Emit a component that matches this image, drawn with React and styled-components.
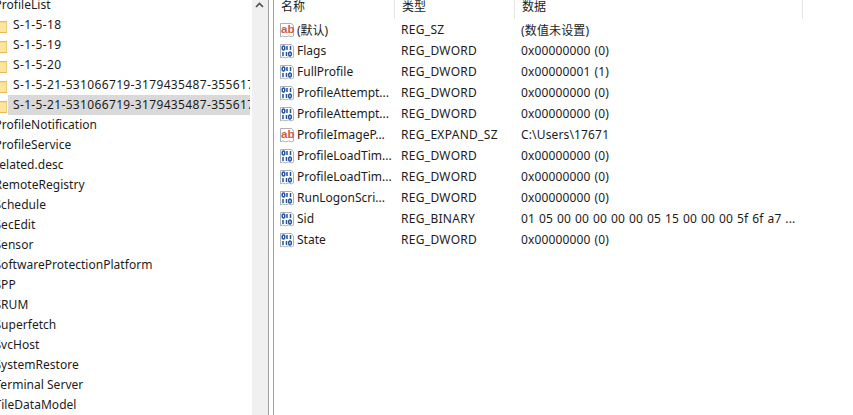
import React from 'react';
import styled, { createGlobalStyle } from 'styled-components';

const GlobalStyle = createGlobalStyle`
  html, body {
    margin: 0;
    padding: 0;
    background: #fff;
  }
  body {
    font-family: "Noto Sans", "Noto Sans CJK SC", sans-serif;
    font-size: 12px;
    color: #1c1c1c;
  }
`;

const treeItems = [
  { label: 'ProfileList' },
  { label: 'S-1-5-18', folder: true },
  { label: 'S-1-5-19', folder: true },
  { label: 'S-1-5-20', folder: true },
  { label: 'S-1-5-21-531066719-3179435487-3556176', folder: true },
  { label: 'S-1-5-21-531066719-3179435487-3556176', folder: true, selected: true },
  { label: 'ProfileNotification' },
  { label: 'ProfileService' },
  { label: 'related.desc' },
  { label: 'RemoteRegistry' },
  { label: 'Schedule' },
  { label: 'SecEdit' },
  { label: 'Sensor' },
  { label: 'SoftwareProtectionPlatform' },
  { label: 'SPP' },
  { label: 'SRUM' },
  { label: 'Superfetch' },
  { label: 'SvcHost' },
  { label: 'SystemRestore' },
  { label: 'Terminal Server' },
  { label: 'TileDataModel' },
];

const values = [
  { icon: 'text', name: '(默认)', type: 'REG_SZ', data: '(数值未设置)' },
  { icon: 'bin', name: 'Flags', type: 'REG_DWORD', data: '0x00000000 (0)' },
  { icon: 'bin', name: 'FullProfile', type: 'REG_DWORD', data: '0x00000001 (1)' },
  { icon: 'bin', name: 'ProfileAttempt...', type: 'REG_DWORD', data: '0x00000000 (0)' },
  { icon: 'bin', name: 'ProfileAttempt...', type: 'REG_DWORD', data: '0x00000000 (0)' },
  { icon: 'text', name: 'ProfileImageP...', type: 'REG_EXPAND_SZ', data: 'C:\\Users\\17671' },
  { icon: 'bin', name: 'ProfileLoadTim...', type: 'REG_DWORD', data: '0x00000000 (0)' },
  { icon: 'bin', name: 'ProfileLoadTim...', type: 'REG_DWORD', data: '0x00000000 (0)' },
  { icon: 'bin', name: 'RunLogonScri...', type: 'REG_DWORD', data: '0x00000000 (0)' },
  { icon: 'bin', name: 'Sid', type: 'REG_BINARY', data: '01 05 00 00 00 00 00 05 15 00 00 00 5f 6f a7 ...' },
  { icon: 'bin', name: 'State', type: 'REG_DWORD', data: '0x00000000 (0)' },
];

const FolderIcon = () => (
  <svg width="16" height="16" viewBox="0 0 16 16">
    <path d="M0 2.5h5l2 2h9v11H0z" fill="#fbdc82" stroke="#e3bb5c" strokeWidth="1" />
    <path d="M1 6h14v9H1z" fill="#fde59f" />
  </svg>
);

const PageShape = () => (
  <path d="M1.5 1.5h11l2 2.5v10l-2 .8-3-.8-3 .8-3-.8-2 .8z" fill="#fff" stroke="#aab0bc" />
);

const TextIcon = () => (
  <svg width="16" height="16" viewBox="0 0 16 16">
    <PageShape />
    <text x="2" y="10.6" fontFamily="Liberation Sans, sans-serif" fontSize="11.5" fontWeight="700" fill="#cf5a45">ab</text>
  </svg>
);

const BinaryIcon = () => (
  <svg width="16" height="16" viewBox="0 0 16 16">
    <PageShape />
    <g fill="none" stroke="#22549f" strokeWidth="1.5">
      <ellipse cx="4.5" cy="5" rx="1.3" ry="2" />
      <path d="M8 3v4M11.5 3v4" />
      <path d="M4 9v4M7.5 9v4" />
      <ellipse cx="11" cy="11" rx="1.3" ry="2" />
    </g>
  </svg>
);

const Chevron = () => (
  <svg width="9" height="6" viewBox="0 0 9 6">
    <path d="M1 5l3.5-3.5L8 5" fill="none" stroke="#505050" strokeWidth="1.6" />
  </svg>
);

const App = () => (
  <>
    <GlobalStyle />
    <Window>
      <TreePane>
        <TreeList>
          {treeItems.map((item, i) => (
            <TreeRow key={i}>
              {item.folder && <FolderIcon />}
              <TreeLabel $folder={item.folder} $selected={item.selected}>{item.label}</TreeLabel>
            </TreeRow>
          ))}
        </TreeList>
      </TreePane>
      <ScrollBar>
        <Chevron />
      </ScrollBar>
      <Splitter />
      <ListPane>
        <HeaderRow>
          <HeaderCell $width={121}>名称</HeaderCell>
          <HeaderCell $width={120}>类型</HeaderCell>
          <HeaderCell $width={288}>数据</HeaderCell>
        </HeaderRow>
        {values.map((v, i) => (
          <ValueRow key={i}>
            <NameCell>
              {v.icon === 'text' ? <TextIcon /> : <BinaryIcon />}
              {v.name}
            </NameCell>
            <TypeCell>{v.type}</TypeCell>
            <DataCell>{v.data}</DataCell>
          </ValueRow>
        ))}
      </ListPane>
    </Window>
  </>
);

const Window = styled.div`
  display: flex;
  width: 853px;
  height: 415px;
  overflow: hidden;
  background: #fff;
`;

const TreePane = styled.div`
  width: 250px;
  flex: none;
  overflow: hidden;
`;

const TreeList = styled.div`
  margin: -5px 0 0 -9px;
`;

const TreeRow = styled.div`
  display: flex;
  align-items: center;
  height: 20px;
  white-space: nowrap;
  gap: 1px;
`;

const TreeLabel = styled.span`
  flex: 1;
  line-height: 20px;
  padding-left: ${(p) => (p.$folder ? '5px' : '3.5px')};
  overflow: hidden;
  letter-spacing: ${(p) => (p.$folder ? '0.35px' : '0.03px')};
  background: ${(p) => (p.$selected ? '#d9d9d9' : 'transparent')};
`;

const ScrollBar = styled.div`
  width: 16px;
  margin-left: 2px;
  flex: none;
  display: flex;
  justify-content: center;
  align-items: flex-start;
  padding: 2px 2px 0 0;
  box-sizing: border-box;
  background: #f0f0f0;
`;

const Splitter = styled.div`
  width: 6px;
  flex: none;
  box-sizing: border-box;
  background: #fff;
  border-left: 1px solid #a0a0a0;
  border-right: 1px solid #a0a0a0;
`;

const ListPane = styled.div`
  flex: 1;
  min-width: 0;
`;

const HeaderRow = styled.div`
  display: flex;
  height: 19px;
`;

const HeaderCell = styled.div`
  width: ${(p) => p.$width}px;
  box-sizing: border-box;
  padding-left: 7px;
  line-height: 13px;
  border-right: 1px solid #e5e5e5;
`;

const ValueRow = styled.div`
  display: grid;
  grid-template-columns: 121px 120px 1fr;
  height: 21px;
  align-items: center;
  white-space: nowrap;
`;

const NameCell = styled.div`
  display: flex;
  align-items: center;
  gap: 2px;
  padding-left: 5px;
`;

const TypeCell = styled.div`
  padding-left: 6px;
  letter-spacing: 0.3px;
`;

const DataCell = styled.div`
  padding-left: 6px;
  letter-spacing: 0.15px;
  word-spacing: 0.7px;
`;

export default App;
